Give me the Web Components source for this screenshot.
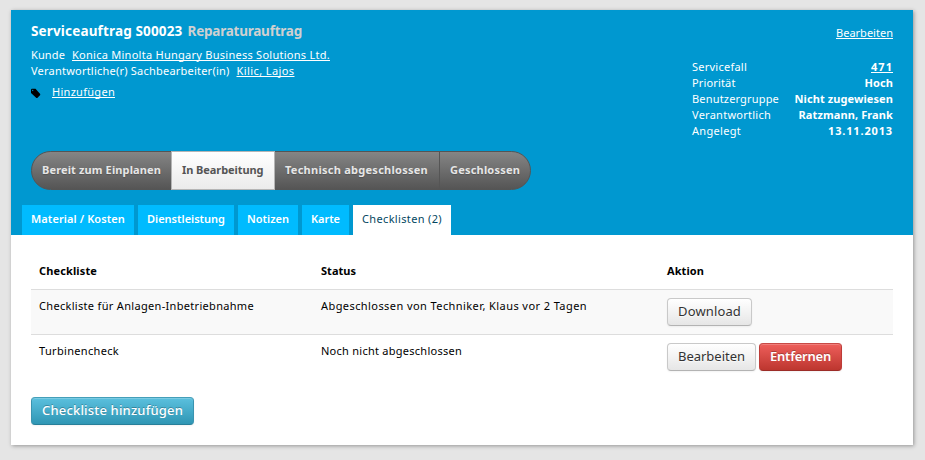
<!DOCTYPE html>
<html lang="de">
<head>
<meta charset="utf-8">
<title>Serviceauftrag S00023</title>
<style>
html,body{margin:0;background:#e5e5e5;height:460px;overflow:hidden}
body{font:11px/16px "Noto Sans","Open Sans",sans-serif;color:#000;padding:10px 12px 0 11px;box-sizing:border-box}
</style>
</head>
<body>
<service-order></service-order>
<script>
const component = (name, html, setup) => {
  const t = document.createElement('template');
  t.innerHTML = html;
  customElements.define(name, class extends HTMLElement {
    constructor() {
      super();
      this.attachShadow({mode: 'open'}).append(t.content.cloneNode(true));
    }
    connectedCallback() { if (setup) setup(this); }
  });
};

component('service-order', `
<style>
:host{display:flex;flex-direction:column;height:435px;background:#fff;box-shadow:1px 1px 4px rgba(0,0,0,.35)}
</style>
<order-header></order-header>
<check-lists></check-lists>`);

component('order-header', `
<style>
:host{display:flex;flex-direction:column;height:225px;box-sizing:border-box;background:#0098d0;color:#fff}
.top{display:flex;justify-content:space-between;padding:0 20px;height:141px}
h1{margin:11px 0 6px;font-size:13.5px;line-height:20px;font-weight:700;display:flex;gap:5px}
h1 .kind{color:#d0d0d0}
.line{display:flex;gap:7px;height:16px}
.tags{display:flex;margin-top:5px;gap:11px}
svg{display:block;margin-top:4px}
.side{display:flex;flex-direction:column;align-items:stretch;padding-top:15px;width:201px}
.edit{display:flex;justify-content:flex-end;margin-bottom:18px}
.fact{display:flex;justify-content:space-between;height:16px}
.fact :last-child{font-weight:700}
.steps{padding:0 20px}
.tabs{display:flex;gap:4px;padding:15px 11px 0}
</style>
<div class="top">
 <div>
  <h1><fit-text w="151.5">Serviceauftrag S00023</fit-text><fit-text class="kind" w="114.5">Reparaturauftrag</fit-text></h1>
  <div class="line"><fit-text w="34">Kunde</fit-text><fit-text link w="258">Konica Minolta Hungary Business Solutions Ltd.</fit-text></div>
  <div class="line"><fit-text w="198.5">Verantwortliche(r) Sachbearbeiter(in)</fit-text><fit-text link w="58">Kilic, Lajos</fit-text></div>
  <div class="tags"><svg width="10" height="11" viewBox="0 0 10 11"><path fill="#000" fill-rule="evenodd" d="M0 1.6.8.8h3.7L9.2 5.9v1L6.3 9.9h-.9L0 5zM1.7 1.8a.6.6 0 1 0 .01 0z"/></svg><fit-text link w="63">Hinzufügen</fit-text></div>
 </div>
 <div class="side">
  <div class="edit"><fit-text link w="57">Bearbeiten</fit-text></div>
  <div class="fact"><fit-text w="55">Servicefall</fit-text><fit-text link w="22">471</fit-text></div>
  <div class="fact"><fit-text w="43.5">Priorität</fit-text><fit-text w="28.5">Hoch</fit-text></div>
  <div class="fact"><fit-text w="87">Benutzergruppe</fit-text><fit-text w="98.5">Nicht zugewiesen</fit-text></div>
  <div class="fact"><fit-text w="79">Verantwortlich</fit-text><fit-text w="94.5">Ratzmann, Frank</fit-text></div>
  <div class="fact"><fit-text w="49">Angelegt</fit-text><fit-text w="65">13.11.2013</fit-text></div>
 </div>
</div>
<div class="steps"><status-steps></status-steps></div>
<div class="tabs">
 <nav-tab><fit-text w="94">Material / Kosten</fit-text></nav-tab>
 <nav-tab><fit-text w="78">Dienstleistung</fit-text></nav-tab>
 <nav-tab><fit-text w="42">Notizen</fit-text></nav-tab>
 <nav-tab><fit-text w="29">Karte</fit-text></nav-tab>
 <nav-tab active><fit-text w="80">Checklisten (2)</fit-text></nav-tab>
</div>`);

component('status-steps', `
<style>
:host{display:flex;width:500px;height:39px;box-sizing:border-box;border:1px solid #555;border-radius:20px;background:linear-gradient(#858585,#555);color:#e6e6e6;font-weight:700;line-height:36px;text-shadow:0 1px 1px rgba(0,0,0,.2)}
.step{box-sizing:border-box;flex:none;padding-left:10px}
.a{width:139px}
.b{width:104px;margin:-1px 0;border:1px solid #b5b5b5;background:linear-gradient(#fff,#ebebeb);color:#555;text-shadow:none}
.c{width:164px}
.d{flex:1;border-left:1px solid #555}
</style>
<div class="step a"><fit-text w="119">Bereit zum Einplanen</fit-text></div>
<div class="step b"><fit-text w="81.5">In Bearbeitung</fit-text></div>
<div class="step c"><fit-text w="143">Technisch abgeschlossen</fit-text></div>
<div class="step d"><fit-text w="70">Geschlossen</fit-text></div>`);

component('nav-tab', `
<style>
:host{display:block;height:30px;box-sizing:border-box;padding:6px 9px;background:#00bbff;color:#fff;font-weight:600}
:host([active]){background:#fff;color:#03475f;font-weight:400}
</style><slot></slot>`);

component('check-lists', `
<style>
:host{display:block;padding:20px 20px 0}
.row{display:grid;grid-template-columns:282px 346px 1fr;padding:8px;height:45px;box-sizing:border-box;border-top:1px solid #ddd}
.head{height:34px;border:0;font-weight:700}
.odd{background:#f9f9f9}
.actions{display:flex;gap:3px}
.add{display:flex;margin-top:18px}
</style>
<div class="row head"><fit-text w="58">Checkliste</fit-text><fit-text w="35">Status</fit-text><fit-text w="37">Aktion</fit-text></div>
<div class="row odd"><fit-text w="215">Checkliste für Anlagen-Inbetriebnahme</fit-text><fit-text w="266">Abgeschlossen von Techniker, Klaus vor 2 Tagen</fit-text>
 <div class="actions"><ui-button><fit-text w="63">Download</fit-text></ui-button></div></div>
<div class="row"><fit-text w="80">Turbinencheck</fit-text><fit-text w="141">Noch nicht abgeschlossen</fit-text>
 <div class="actions"><ui-button><fit-text w="67">Bearbeiten</fit-text></ui-button><ui-button kind="danger"><fit-text w="61">Entfernen</fit-text></ui-button></div></div>
<div class="add"><ui-button kind="info"><fit-text w="141">Checkliste hinzufügen</fit-text></ui-button></div>`);

component('ui-button', `
<style>
:host{display:block;height:28px;box-sizing:border-box;padding:2px 10px;font-size:13px;line-height:20px;border:1px solid;border-color:#c9c9c9 #c9c9c9 #b3b3b3;border-radius:4px;color:#333;background:linear-gradient(#fff,#e6e6e6);box-shadow:inset 0 1px 0 rgba(255,255,255,.2),0 1px 2px rgba(0,0,0,.05);text-shadow:0 1px 1px rgba(255,255,255,.75)}
:host([kind]){color:#fff;text-shadow:0 -1px 0 rgba(0,0,0,.25)}
:host([kind=danger]){background:linear-gradient(#ee5f5b,#bd362f);border-color:#c84a46 #bd3c38 #9c2c27;font-weight:600}
:host([kind=info]){background:linear-gradient(#5bc0de,#2f96b4);border-color:#449fb9 #3a94b0 #277f99;font-weight:500}
</style><slot></slot>`);

/* Tracks its text so that it fills the width given in the "w" attribute. */
component('fit-text', `
<style>
:host{display:block;white-space:nowrap;flex:none}
span{display:inline-block;text-decoration-skip-ink:none}
:host([link]) span{text-decoration:underline;text-underline-offset:1px;text-decoration-thickness:1px;cursor:pointer}
</style><span><slot></slot></span>`, el => {
  const w = parseFloat(el.getAttribute('w'));
  const span = el.shadowRoot.querySelector('span');
  const natural = span.getBoundingClientRect().width;
  span.style.letterSpacing = (w - natural) / el.textContent.length + 'px';
  el.style.width = w + 'px';
});
</script>
</body>
</html>
